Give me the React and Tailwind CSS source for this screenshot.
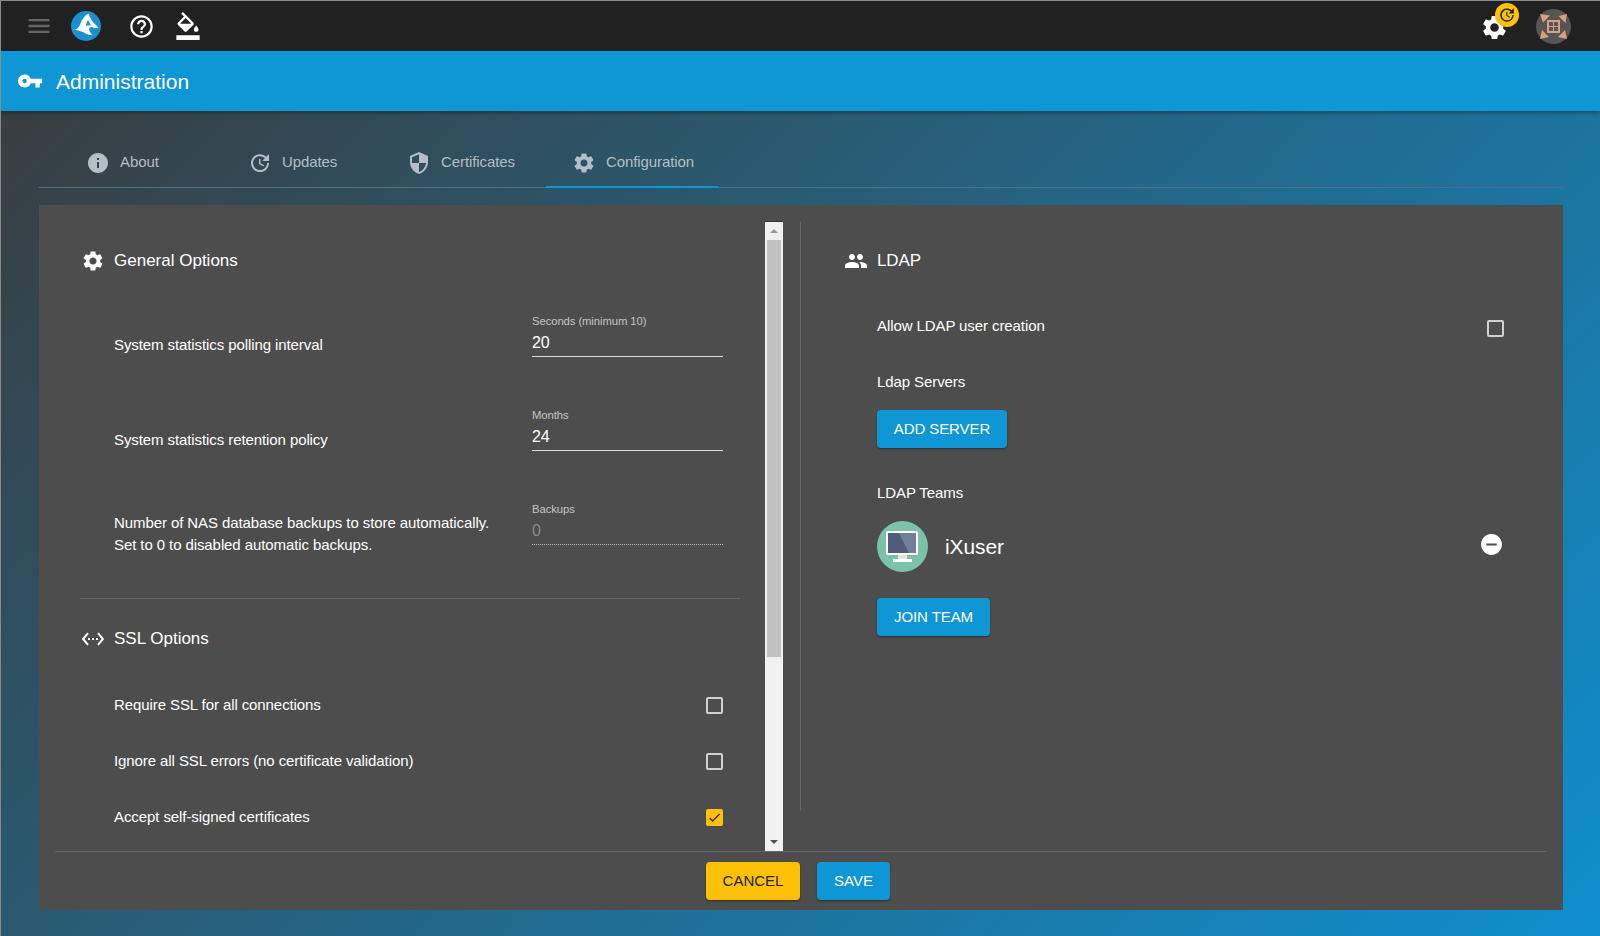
import React from "react";
import {
  MdMenu, MdHelpOutline, MdFormatColorFill, MdVpnKey, MdInfo, MdUpdate, MdSecurity,
  MdSettings, MdPeople, MdSettingsEthernet, MdRemoveCircle, MdCheck,
} from "react-icons/md";

const Logo = () => (
  <svg width="30" height="30" viewBox="0 0 30 30">
    <circle cx="15" cy="15" r="15" fill="#1a8fd1" />
    <path d="M2.500 18.500c3 .5 5.500-2 7-6 1.500-4 4-8 8-10 1.500 5 5 10 10 14-2.500 1-5 .5-7-.5-1.500 0-2.500 1-2.500 2.500.5 2 2 3.500 3 5.500-3 .5-6-1-8-2.500-3-2-7-1.500-10.500-3.500z" fill="#fff" />
    <path d="M17 9c1 2 2 4 3.500 5.500-2-.5-4-.5-6 .5.500-2 1.500-4 2.500-6z" fill="#1a8fd1" />
  </svg>
);

const UserAvatar = () => (
  <svg width="35" height="35" viewBox="0 0 35 35">
    <circle cx="17.500" cy="17.500" r="17.500" fill="#555" />
    <path d="M4 5l10 1.500-7 7zM31 5l-1.500 9-7-7zM4 30l2-9 7 7zM31 30l-9-2 7-7z" fill="#d8a07e" />
    <rect x="11" y="11" width="13" height="13" fill="#d8a07e" />
    <rect x="13" y="13" width="4" height="4" fill="#555" />
    <rect x="18" y="13" width="4" height="4" fill="#555" />
    <rect x="13" y="18" width="4" height="4" fill="#555" />
    <rect x="18" y="18" width="4" height="4" fill="#555" />
  </svg>
);

const TeamAvatar = () => (
  <svg width="51" height="51" viewBox="0 0 51 51">
    <circle cx="25.500" cy="25.500" r="25.500" fill="#7cc1a9" />
    <rect x="9" y="10" width="32" height="24" rx="1.500" fill="#fff" />
    <rect x="11" y="12" width="28" height="20" fill="#4f5d78" />
    <path d="M22 12h17v20h-7z" fill="#747f97" />
    <rect x="21" y="34" width="9" height="4" fill="#e9e4d2" />
    <rect x="16" y="38" width="19" height="3" fill="#fff" />
  </svg>
);

const Tab = ({ icon: Icon, label, width, active }) => (
  <div className={`${width} h-[47px] flex items-center pl-[27px] pb-[2px] gap-[10px] text-[15px] tracking-[-0.09px] text-[#b4bec4] border-b-2 ${active ? "border-[#0f96d5]" : "border-transparent"}`}>
    <Icon size={24} className="shrink-0 -ml-[1px]" />
    <span>{label}</span>
  </div>
);

const Heading = ({ icon: Icon, label }) => (
  <div className="h-[24px] flex items-center gap-[9px] text-[17px] text-white">
    <Icon size={24} className="shrink-0" />
    <span>{label}</span>
  </div>
);

const Field = ({ label, value, disabled }) => (
  <div className={`w-[191px] h-[46px] shrink-0 flex flex-col border-b ${disabled ? "border-dotted border-[#bbb]" : "border-[#ddd]"}`}>
    <div className="h-[20px] leading-[20px] text-[11.3px] text-[#c4c4c4]">{label}</div>
    <div className={`h-[25px] leading-[23px] text-[16px] ${disabled ? "text-[#8a8a8a]" : "text-white"}`}>{value}</div>
  </div>
);

const Box = ({ checked }) =>
  checked ? (
    <div className="w-[17px] h-[17px] rounded-[2px] bg-[#ffc107] flex items-center justify-center text-[#333]">
      <MdCheck size={15} />
    </div>
  ) : (
    <div className="w-[17px] h-[17px] rounded-[2px] border-2 border-[#d0d0d0]" />
  );

const CheckRow = ({ label, checked }) => (
  <div className="h-[56px] flex items-center justify-between pl-[33px] pr-[18px] text-[15px] tracking-[-0.09px] text-white">
    <span>{label}</span>
    <Box checked={checked} />
  </div>
);

const Btn = ({ children, width, yellow }) => (
  <button className={`${width} h-[38px] rounded-[4px] text-[15px] shadow-[0_1px_2px_rgba(0,0,0,0.4)] ${yellow ? "bg-[#ffc107] text-[#222]" : "bg-[#0f96d5] text-white"}`}>
    {children}
  </button>
);

const App = () => {
  return (
    <div className="w-[1600px] h-[936px] overflow-hidden flex flex-col border-t border-l border-[#8a8a8a] bg-[linear-gradient(135deg,#3a3a3a_0%,#0f8fce_100%)] font-['Liberation_Sans',Arial,sans-serif]">
      {/* top bar */}
      <div className="h-[50px] shrink-0 bg-[#212121] flex items-center text-white">
        <MdMenu size={28} className="ml-[24px] text-[#666]" />
        <div className="ml-[18px]"><Logo /></div>
        <MdHelpOutline size={27} className="ml-[27px]" />
        <div className="ml-[19px] relative w-[27px] h-[27px]">
          <MdFormatColorFill size={28} className="-mt-[1px]" />
        </div>
        <div className="ml-auto mr-[3px] flex items-center relative">
          <MdSettings size={29} className="mr-[27px] mt-[3px]" />
          <div className="absolute left-[15px] -top-[6px] w-[24px] h-[24px] rounded-full bg-[#ffc107] flex items-center justify-center text-[#222]">
            <MdUpdate size={18} />
          </div>
          <div className="mr-[26px]"><UserAvatar /></div>
        </div>
      </div>

      {/* title bar */}
      <div className="h-[60px] shrink-0 bg-[#0f96d5] flex items-center text-white shadow-[0_2px_4px_rgba(0,0,0,0.3)]">
        <MdVpnKey size={26} className="ml-[16px]" />
        <span className="ml-[13px] text-[21px] mt-[1px]">Administration</span>
      </div>

      {/* tabs */}
      <div className="ml-[38px] w-[1524px] h-[77px] pt-[30px] pl-[21px] flex border-b border-[#4c7286] shrink-0">
        <Tab icon={MdInfo} label="About" width="w-[162px]" />
        <Tab icon={MdUpdate} label="Updates" width="w-[159px]" />
        <Tab icon={MdSecurity} label="Certificates" width="w-[165px]" />
        <Tab icon={MdSettings} label="Configuration" width="w-[172px]" active />
      </div>

      {/* panel */}
      <div className="ml-[38px] mt-[17px] w-[1524px] h-[705px] bg-[#4d4d4d] flex flex-col shrink-0">
        <div className="h-[646px] flex pt-[17px] overflow-hidden">
          <div className="w-[726px] pl-[42px] pr-[24px] shrink-0">
            <div className="mt-[27px]"><Heading icon={MdSettings} label="General Options" /></div>
            <div className="mt-[38px] flex justify-between pl-[33px] pr-[18px] text-[15px] tracking-[-0.09px] text-white">
              <div className="pt-[23px] leading-[22px]">System statistics polling interval</div>
              <Field label="Seconds (minimum 10)" value="20" />
            </div>
            <div className="mt-[48px] flex justify-between pl-[33px] pr-[18px] text-[15px] tracking-[-0.09px] text-white">
              <div className="pt-[24px] leading-[22px]">System statistics retention policy</div>
              <Field label="Months" value="24" />
            </div>
            <div className="mt-[48px] flex justify-between pl-[33px] pr-[18px] text-[15px] tracking-[-0.09px] text-white">
              <div className="pt-[13px] leading-[22px]">Number of NAS database backups to store automatically.<br />Set to 0 to disabled automatic backups.</div>
              <Field label="Backups" value="0" disabled />
            </div>
            <div className="mt-[42px] -ml-[1px] mr-[1px] border-t border-[#666]" />
            <div className="mt-[28px]"><Heading icon={MdSettingsEthernet} label="SSL Options" /></div>
            <div className="mt-[26px]">
              <CheckRow label="Require SSL for all connections" />
              <CheckRow label="Ignore all SSL errors (no certificate validation)" />
              <CheckRow label="Accept self-signed certificates" checked />
            </div>
          </div>

          {/* scrollbar */}
          <div className="w-[18px] h-[630px] -mt-[1px] shrink-0 bg-[#f1f1f1] border-t border-[#333] flex flex-col items-center">
            <div className="h-[18px] flex items-center justify-center shrink-0">
              <div className="w-0 h-0 border-x-[4px] border-x-transparent border-b-[4px] border-b-[#999]" />
            </div>
            <div className="w-[14px] h-[417px] bg-[#c1c1c1] shrink-0" />
            <div className="mt-auto h-[18px] flex items-center justify-center shrink-0">
              <div className="w-0 h-0 border-x-[4px] border-x-transparent border-t-[4px] border-t-[#505050]" />
            </div>
          </div>

          {/* right */}
          <div className="ml-[17px] h-[589px] flex-1 border-l border-[#666] pl-[43px] pr-[59px] text-[15px] tracking-[-0.09px] text-white">
            <div className="mt-[27px]"><Heading icon={MdPeople} label="LDAP" /></div>
            <div className="mt-[42px] pl-[33px] flex justify-between items-start">
              <div className="leading-[22px]">Allow LDAP user creation</div>
              <div className="mt-[5px]"><Box /></div>
            </div>
            <div className="mt-[34px] ml-[33px] leading-[22px]">Ldap Servers</div>
            <div className="mt-[17px] ml-[33px]"><Btn width="w-[130px]">ADD SERVER</Btn></div>
            <div className="mt-[34px] ml-[33px] leading-[22px]">LDAP Teams</div>
            <div className="mt-[17px] ml-[33px] flex items-center justify-between">
              <div className="flex items-center gap-[17px]">
                <TeamAvatar />
                <span className="text-[21px]">iXuser</span>
              </div>
              <MdRemoveCircle size={25} className="-mt-[4px]" />
            </div>
            <div className="mt-[26px] ml-[33px]"><Btn width="w-[113px]">JOIN TEAM</Btn></div>
          </div>
        </div>

        {/* footer */}
        <div className="mx-[16px] flex-1 border-t border-[#666] pt-[10px] pr-[6px] flex justify-center gap-[17px]">
          <Btn width="w-[94px]" yellow>CANCEL</Btn>
          <Btn width="w-[73px]">SAVE</Btn>
        </div>
      </div>
    </div>
  );
};

export default App;
